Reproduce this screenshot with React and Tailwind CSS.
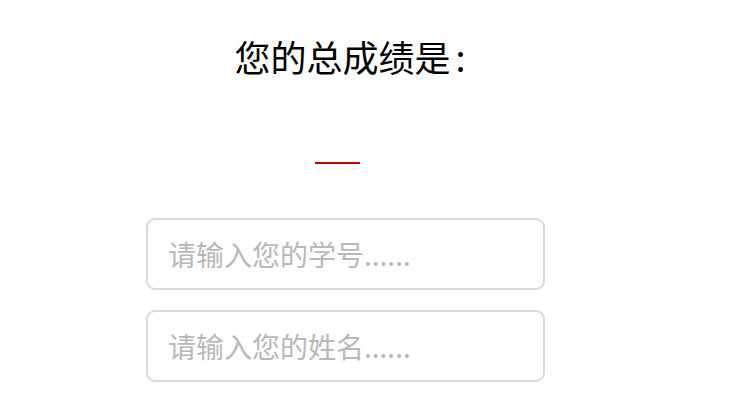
export default function App() {
  return (
    <div
      className="w-[741px] h-[413px] bg-white overflow-hidden"
      style={{ fontFamily: '"Noto Sans CJK SC", "Noto Sans", sans-serif' }}
    >
      {/* Title */}
      <h1 className="w-[700px] pt-[38px] text-center text-[36px] leading-none font-normal text-black">
        您的总成绩是<span className="ml-[5px]">:</span>
      </h1>

      {/* Score underline (empty score) */}
      <div className="ml-[315px] mt-[88px] w-[45px] h-[2px] bg-[#c40000]" />

      {/* Inputs */}
      <div className="ml-[146px] mt-[54px] w-[399px] flex flex-col gap-[20px]">
        <input
          type="text"
          placeholder="请输入您的学号......"
          className="h-[72px] w-full rounded-[9px] border-2 border-[#dadada] px-[20px] text-[28px] text-black placeholder:text-[#b8b8b8] outline-none"
        />
        <input
          type="text"
          placeholder="请输入您的姓名......"
          className="h-[72px] w-full rounded-[9px] border-2 border-[#dadada] px-[20px] text-[28px] text-black placeholder:text-[#b8b8b8] outline-none"
        />
      </div>
    </div>
  );
}
